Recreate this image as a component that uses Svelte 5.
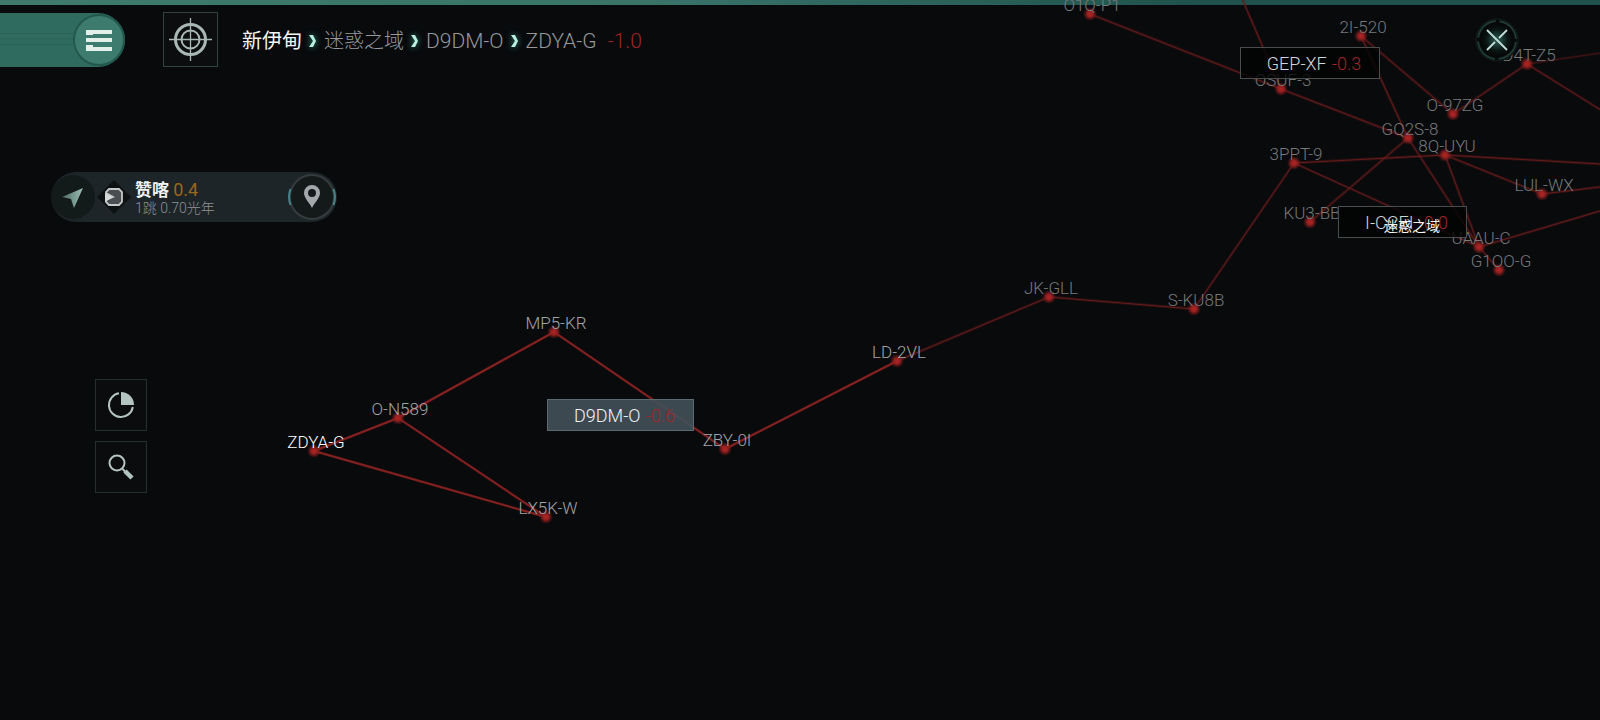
<script>
    // x/y is the star, the label is centred just above it
    const systems = [
        { name: 'O1Q-P1', x: 1090, y: 14 },
        { name: 'OSUF-3', x: 1281, y: 89 },
        { name: '2I-520', x: 1361, y: 36 },
        { name: 'D4T-Z5', x: 1527, y: 64 },
        { name: 'O-97ZG', x: 1453, y: 114 },
        { name: 'GQ2S-8', x: 1408, y: 138 },
        { name: '8Q-UYU', x: 1445, y: 155 },
        { name: '3PPT-9', x: 1294, y: 163 },
        { name: 'KU3-BB', x: 1310, y: 222 },
        { name: 'LUL-WX', x: 1542, y: 194 },
        { name: 'UAAU-C', x: 1479, y: 247 },
        { name: 'G1OO-G', x: 1499, y: 270 },
        { name: 'JK-GLL', x: 1049, y: 297 },
        { name: 'S-KU8B', x: 1194, y: 309 },
        { name: 'LD-2VL', x: 897, y: 361, tone: 'near' },
        { name: 'ZBY-0I', x: 725, y: 449, tone: 'near' },
        { name: 'MP5-KR', x: 554, y: 332, tone: 'near' },
        { name: 'O-N589', x: 398, y: 418, tone: 'near' },
        { name: 'LX5K-W', x: 546, y: 517, tone: 'near' },
        { name: 'ZDYA-G', x: 314, y: 451, tone: 'current' }
    ];

    const jumps = [
        ['O1Q-P1', 'OSUF-3'], ['OSUF-3', 'GQ2S-8'], ['2I-520', 'GQ2S-8'], ['2I-520', 'O-97ZG'],
        ['O-97ZG', 'D4T-Z5'], ['3PPT-9', '8Q-UYU'], ['3PPT-9', 'UAAU-C'], ['GQ2S-8', 'KU3-BB'],
        ['GQ2S-8', 'UAAU-C'], ['8Q-UYU', 'UAAU-C'], ['8Q-UYU', 'LUL-WX'], ['UAAU-C', 'G1OO-G'],
        ['3PPT-9', 'S-KU8B'], ['S-KU8B', 'JK-GLL'], ['JK-GLL', 'LD-2VL'], ['LD-2VL', 'ZBY-0I'],
        ['ZBY-0I', 'MP5-KR'], ['MP5-KR', 'O-N589'], ['O-N589', 'ZDYA-G'], ['ZDYA-G', 'LX5K-W'],
        ['O-N589', 'LX5K-W']
    ];

    // jumps that leave the visible area
    const exits = [
        { from: 'OSUF-3', x: 1234, y: -20 },
        { from: 'D4T-Z5', x: 1673, y: 155 },
        { from: 'D4T-Z5', x: 1673, y: 42, faint: true },
        { from: '8Q-UYU', x: 1755, y: 173 },
        { from: 'LUL-WX', x: 1658, y: 180 },
        { from: 'UAAU-C', x: 1721, y: 175 }
    ];

    const constellations = [
        { name: 'GEP-XF', sec: '-0.3', x: 1240, y: 47, w: 140 },
        { name: 'I-CCEI', sec: '-0.0', x: 1338, y: 206, w: 129 },
        { name: 'D9DM-O', sec: '-0.6', x: 547, y: 399, w: 147 }
    ];

    const byName = Object.fromEntries(systems.map((s) => [s.name, s]));

    const lines = [
        ...jumps.map(([a, b]) => {
            const from = byName[a];
            const to = byName[b];
            return { from, to, near: !!from.tone && !!to.tone };
        }),
        ...exits.map((e) => ({ from: byName[e.from], to: e, faint: e.faint }))
    ];

    let selected = $state('D9DM-O');
</script>

{#snippet chevron()}
    <svg class="chevron" width="8" height="14" viewBox="0 0 8 14" aria-hidden="true">
        <path d="M0 1h4l3 6-3 6H0l4-6z" />
    </svg>
{/snippet}

<div class="page">
    <div class="top-line"></div>

    <div class="map">
        <svg class="chart" width="100%" height="100%">
            <defs>
                <radialGradient id="star">
                    <stop offset="0" stop-color="#b32424" />
                    <stop offset="0.4" stop-color="#952020" />
                    <stop offset="1" stop-color="#801a1a" stop-opacity="0" />
                </radialGradient>
            </defs>
            {#each lines as l}
                <g class:faint={l.faint}>
                    <line class="halo" x1={l.from.x} y1={l.from.y} x2={l.to.x} y2={l.to.y} />
                    <line class="jump" class:near={l.near} x1={l.from.x} y1={l.from.y} x2={l.to.x} y2={l.to.y} />
                </g>
            {/each}
            {#each systems as s (s.name)}
                <circle cx={s.x} cy={s.y} r="7" fill="url(#star)" />
                <text class="system {s.tone ?? ''}" x={s.x + 2} y={s.y - 3}>{s.name}</text>
            {/each}
        </svg>

        {#each constellations as c (c.name)}
            <button
                class="constellation"
                class:active={selected === c.name}
                style="left: {c.x}px; top: {c.y}px; width: {c.w}px"
                onclick={() => (selected = c.name)}
            >
                <span>{c.name}</span>
                <span class="sec">{c.sec}</span>
            </button>
        {/each}
        <span class="region">迷惑之域</span>
    </div>

    <header>
        <button class="menu" aria-label="菜单">
            <svg width="54" height="54" viewBox="0 0 54 54">
                <circle cx="28" cy="27" r="25" fill="#3c7b6e" stroke="#24574e" stroke-width="2" />
                <path fill="#e4efea" d="M15 17h26v4H22v1h-7zM15 25h26v4H15zM15 32h7v2h19v4H15z" />
            </svg>
        </button>

        <button class="locate" aria-label="定位">
            <svg width="43" height="43" viewBox="0 0 43 43" fill="none" stroke="#a9b8b4">
                <circle cx="21.5" cy="21.5" r="15" stroke-width="3" />
                <circle cx="21.5" cy="21.5" r="9" stroke-width="2" />
                <path d="M21.5 0v43M0 21.5h43" stroke-width="1.3" />
            </svg>
        </button>

        <nav>
            <a class="root" href="#new-eden">新伊甸</a>
            {@render chevron()}
            <a href="#region">迷惑之域</a>
            {@render chevron()}
            <a class="code" href="#constellation">D9DM-O</a>
            {@render chevron()}
            <a class="code" href="#system">ZDYA-G</a>
            <span class="code sec">-1.0</span>
        </nav>

        <button class="close" aria-label="关闭">
            <svg width="44" height="44" viewBox="0 0 44 44" fill="none">
                <defs>
                    <radialGradient id="glow">
                        <stop offset="0" stop-color="#2b5f54" />
                        <stop offset="0.7" stop-color="#0a1412" />
                        <stop offset="1" stop-color="#050807" />
                    </radialGradient>
                </defs>
                <circle cx="22" cy="22" r="21" fill="#060908" stroke="#14201e" />
                <circle cx="22" cy="22" r="16" fill="url(#glow)" />
                <circle cx="22" cy="22" r="19" stroke="#1f3a34" stroke-width="2" stroke-dasharray="26 3.84" stroke-dashoffset="-2" />
                <path d="M12 12l20 20M32 12l-8 8M20 24l-8 8" stroke="#c3ded6" stroke-width="1.8" />
            </svg>
        </button>
    </header>

    <section class="route">
        <svg class="heading" width="46" height="50" viewBox="0 0 46 50">
            <defs>
                <linearGradient id="arrow" x1="0" x2="1">
                    <stop offset="0" stop-color="#4a6b63" />
                    <stop offset="1" stop-color="#9cbdb3" />
                </linearGradient>
            </defs>
            <circle cx="22" cy="25" r="22" fill="#131a1a" />
            <path d="M11 25l21-9-9 20-3-9z" fill="url(#arrow)" />
        </svg>
        <svg class="gate" width="34" height="34" viewBox="0 0 34 34">
            <path d="M17 0l17 17-17 17L0 17z" fill="#0d1112" />
            <path d="M12 9h10l3 3v10l-3 3H12l-3-3v-2l7-3-7-4v-1z" fill="#4b4e50" stroke="#c5c8c9" stroke-width="1.8" />
            <path d="M8 13l8 4-8 5z" fill="#d5d8d8" />
        </svg>
        <div class="info">
            <div class="title">赞喀 <span>0.4</span></div>
            <div class="detail">1跳 0.70光年</div>
        </div>
        <button class="pin" aria-label="目的地">
            <svg width="50" height="50" viewBox="0 0 50 50" fill="none">
                <circle cx="25" cy="25" r="22" fill="#14191a" stroke="#343c3d" stroke-width="2" />
                <path d="M3.500 17a23 23 0 0 0 0 16M46.500 17a23 23 0 0 1 0 16" stroke="#47838a" stroke-width="2" />
                <path fill-rule="evenodd" fill="#a3a8aa" d="M25 13a8 8 0 0 0-8 8c0 5 5 9 8 15 3-6 8-10 8-15a8 8 0 0 0-8-8zm0 4a4 4 0 1 1 0 8 4 4 0 0 1 0-8z" />
            </svg>
        </button>
    </section>

    <aside>
        <button aria-label="统计">
            <svg width="28" height="28" viewBox="0 0 28 28">
                <path d="M12 2.200A12 12 0 1 0 25.800 16" fill="none" stroke="#b4c4c0" stroke-width="2" />
                <path d="M14 1a13 13 0 0 1 13 13H14z" fill="#b4c4c0" />
            </svg>
        </button>
        <button aria-label="搜索">
            <svg width="28" height="28" viewBox="0 0 28 28" fill="none" stroke="#b4c4c0">
                <circle cx="10" cy="10" r="7.5" stroke-width="2" />
                <path d="M15.500 16l3 3" stroke-width="2" />
                <path d="M18 18l7 7" stroke-width="4.5" />
            </svg>
        </button>
    </aside>
</div>

<style>
    :global(body) {
        margin: 0;
        background: #080a0c;
    }

    .page {
        position: relative;
        min-height: 100vh;
        overflow: hidden;
        background: #080a0c;
        color: #96989a;
        font-family: Roboto, "Noto Sans CJK SC", sans-serif;
        font-weight: 300;
    }

    button {
        padding: 0;
        border: 0;
        background: none;
        font: inherit;
        color: inherit;
        cursor: pointer;
    }

    svg {
        display: block;
    }

    .top-line {
        height: 5px;
        background: linear-gradient(90deg, #3f7a6d, #3a7469 40%, #1f524c 75%);
    }

    /* Star map lies behind the controls */
    .map {
        position: absolute;
        inset: 0;
    }

    .faint {
        opacity: 0.6;
    }

    .halo {
        stroke: #6b1a1a;
        stroke-width: 3;
        stroke-opacity: 0.35;
    }

    .jump {
        stroke: #641c1c;
        stroke-width: 1;
    }

    .jump.near {
        stroke: #832121;
        stroke-width: 2;
    }

    .system {
        fill: #77797b;
        font-size: 17px;
        text-anchor: middle;
    }

    .system.near {
        fill: #a3a5a7;
    }

    .system.current {
        fill: #ffffff;
    }

    .constellation {
        position: absolute;
        display: flex;
        align-items: center;
        justify-content: center;
        gap: 5px;
        box-sizing: border-box;
        height: 32px;
        padding-left: 8px;
        border: 1px solid #484d4d;
        background: rgba(2, 4, 4, 0.8);
        color: #d2d4d5;
        font-size: 18px;
        white-space: nowrap;
    }

    .constellation.active {
        border-color: #5b6c70;
        background: rgba(68, 80, 89, 0.9);
        color: #f0f3f5;
    }

    .sec {
        color: #a02626;
    }

    .region {
        position: absolute;
        left: 1384px;
        top: 216px;
        color: #f4f6f6;
        font-size: 14px;
        line-height: 20px;
        font-weight: 400;
    }

    header {
        position: relative;
        display: flex;
        align-items: center;
        padding: 7px 81px 0 0;
        pointer-events: none;
    }

    header button,
    header a {
        pointer-events: auto;
    }

    .menu {
        display: flex;
        justify-content: flex-end;
        width: 125px;
        height: 54px;
        margin-right: 38px;
        border-radius: 0 27px 27px 0;
        background: linear-gradient(#32705f00 36%, #2a6156 38%, #32705f00 40%, #32705f00 46%, #2a6156 48%, #32705f00 50%, #32705f00 56%, #2a6156 58%, #32705f00 60%), #306b60;
    }

    .locate {
        display: grid;
        place-items: center;
        box-sizing: border-box;
        width: 55px;
        height: 55px;
        margin-right: 24px;
        border: 1px solid #33433f;
        background: #0b0d0e;
    }

    nav {
        display: flex;
        align-items: center;
        gap: 7px;
        padding-top: 2px;
        font-size: 20px;
        line-height: 28px;
        white-space: nowrap;
    }

    nav a {
        color: inherit;
        text-decoration: none;
    }

    nav .root {
        color: #f4f6f6;
        font-weight: 400;
    }

    nav .code {
        font-size: 21px;
    }

    nav .sec {
        padding-left: 4px;
    }

    .chevron {
        fill: #b9f0df;
        filter: drop-shadow(0 0 3px #3f9a84);
    }

    .close {
        margin-left: auto;
    }

    .route {
        position: relative;
        display: flex;
        align-items: center;
        width: 286px;
        height: 50px;
        margin: 105px 0 0 51px;
        border-radius: 25px;
        background: #1e2528;
    }

    .info {
        flex: 1;
        padding: 2px 0 0 4px;
    }

    .title {
        color: #f2f4f4;
        font-size: 17px;
        line-height: 20px;
        font-weight: 700;
    }

    .title span {
        color: #9a671d;
        font-size: 18px;
        font-weight: 400;
    }

    .detail {
        color: #8d9193;
        font-size: 14px;
        line-height: 16px;
    }

    aside {
        position: relative;
        display: flex;
        flex-direction: column;
        gap: 10px;
        width: 52px;
        margin: 157px 0 0 95px;
    }

    aside button {
        display: grid;
        place-items: center;
        height: 52px;
        border: 1px solid #22302e;
        background: #0a0c0d;
    }
</style>
